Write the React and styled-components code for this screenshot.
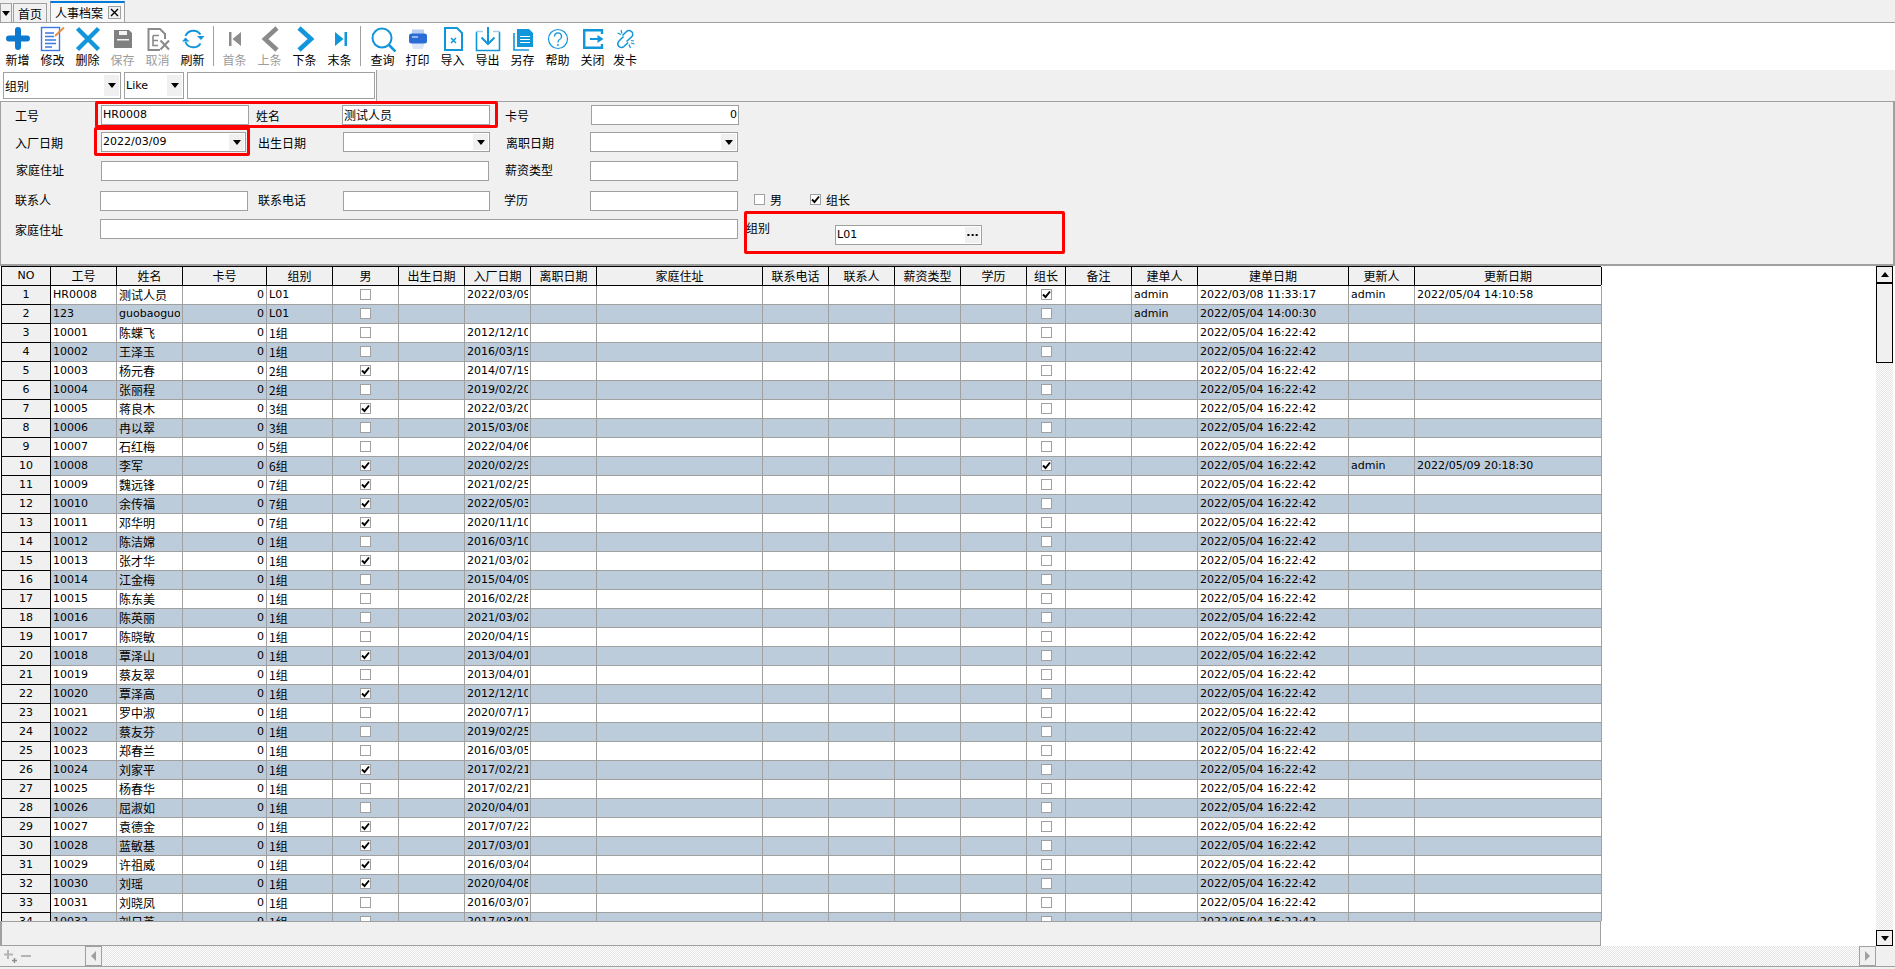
import React from "react";
import styled, { createGlobalStyle } from "styled-components";

const LATIN = `"DejaVu Sans", "Noto Sans CJK SC", sans-serif`;
const CJK = `"Noto Sans CJK SC", "DejaVu Sans", sans-serif`;
const LINE = "#a0a0a0";
const PANEL = "#f0f0f0";
const BLUE = "#1296db";
const DITHER = `repeating-conic-gradient(#e4e4e4 0 25%, #ffffff 0 50%) 0 0 / 2px 2px`;

const GlobalStyle = createGlobalStyle`
  html, body {
    margin: 0;
    height: 969px;
    overflow: hidden;
    background: #f0f0f0;
  }
`;

const Page = styled.div`
  width: 1895px;
  height: 969px;
  display: flex;
  flex-direction: column;
  font-family: ${CJK};
  font-size: 12px;
  color: #000;
  overflow: hidden;
`;

/* ---- tabs ---- */
const TabBar = styled.div`
  height: 22px;
  flex: none;
  display: flex;
  align-items: flex-end;
  background: ${PANEL};
  border-bottom: 1px solid ${LINE};
`;

const TabMenu = styled.div`
  width: 10px;
  height: 18px;
  border: 1px solid ${LINE};
  border-bottom: 0;
  box-sizing: content-box;
  margin-right: 1px;
  display: flex;
  align-items: center;
  justify-content: center;
`;

const Tab = styled.div`
  height: ${(p) => (p.$active ? "21px" : "19px")};
  box-sizing: border-box;
  padding: 0 ${(p) => (p.$active ? "3px" : "4px")} 0 4px;
  margin-right: 3px;
  display: flex;
  align-items: center;
  gap: 5px;
  border: 1px solid ${LINE};
  border-bottom: 0;
  background: ${(p) => (p.$active ? "#f8f8f8" : "#f0f0f0")};
  border-top: ${(p) => (p.$active ? "2px solid #0078d7" : `1px solid ${LINE}`)};
`;

const TabClose = styled.span`
  width: 13px;
  height: 13px;
  box-sizing: border-box;
  border: 1px solid ${LINE};
  background: #f0f0f0;
  display: flex;
  align-items: center;
  justify-content: center;
`;

const Arrow = styled.span`
  display: block;
  flex: none;
  width: 0;
  height: 0;
  border-left: ${(p) => p.$size || 4}px solid transparent;
  border-right: ${(p) => p.$size || 4}px solid transparent;
  border-top: ${(p) => (p.$up ? 0 : `${(p.$size || 4) + 1}px solid #000`)};
  border-bottom: ${(p) => (p.$up ? `${(p.$size || 4) + 1}px solid #000` : 0)};
`;

/* ---- toolbar ---- */
const Toolbar = styled.div`
  height: 47px;
  flex: none;
  display: flex;
  background: #fff;
  box-sizing: border-box;
  padding-top: 3px;
`;

const ToolButton = styled.div`
  width: ${(p) => p.$w || 35}px;
  display: flex;
  flex-direction: column;
  align-items: center;
  color: ${(p) => (p.$off ? "#9c9c9c" : "#000")};
  line-height: 16px;
  svg {
    display: block;
    flex: none;
  }
`;

const ToolSep = styled.div`
  width: 1px;
  height: 40px;
  margin: 0 ${(p) => p.$right}px 0 3px;
  background: ${LINE};
`;

/* ---- quick filter ---- */
const FilterRow = styled.div`
  height: 31px;
  flex: none;
  box-sizing: border-box;
  display: flex;
  align-items: flex-start;
  gap: 3px;
  width: 377px;
  padding: 2px 0 0 3px;
  background: #fff;
  border-right: 1px solid ${LINE};
`;

const FilterBox = styled.div`
  width: ${(p) => p.$w}px;
  height: 27px;
  box-sizing: border-box;
  border: 1px solid ${LINE};
  background: #fff;
  display: flex;
  align-items: center;
  padding: 2px 1px 2px 1px;
  font-family: ${(p) => (p.$latin ? LATIN : CJK)};
  font-size: ${(p) => (p.$latin ? "11px" : "12px")};
`;

const BoxText = styled.span`
  flex: 1;
  white-space: nowrap;
  overflow: hidden;
`;

const DropButton = styled.span`
  width: 15px;
  align-self: stretch;
  background: ${PANEL};
  display: flex;
  align-items: center;
  justify-content: center;
  font-weight: 700;
  font-size: 11px;
`;

/* ---- form ---- */
const Form = styled.div`
  position: relative;
  height: 165px;
  flex: none;
  box-sizing: border-box;
  background: ${PANEL};
  border-top: 1px solid ${LINE};
  border-left: 1px solid ${LINE};
  border-right: 2px solid ${LINE};
  border-bottom: 2px solid ${LINE};
  padding-top: 3px;
`;

const FormRow = styled.div`
  display: flex;
  height: ${(p) => p.$h || 20}px;
  margin-bottom: ${(p) => p.$gap}px;
  margin-left: ${(p) => p.$left}px;
`;

const FieldLabel = styled.div`
  width: ${(p) => p.$w}px;
  padding-left: ${(p) => p.$pad || 0}px;
  padding-top: ${(p) => p.$top ?? 3}px;
  box-sizing: border-box;
  line-height: 16px;
  flex: none;
  white-space: nowrap;
`;

const Field = styled.div`
  width: ${(p) => p.$w}px;
  height: 20px;
  flex: none;
  box-sizing: border-box;
  border: 1px solid ${LINE};
  background: #fff;
  display: flex;
  align-items: stretch;
  padding: 1px;
  margin-top: ${(p) => p.$top || 0}px;
  font-family: ${(p) => (p.$cjk ? CJK : LATIN)};
  font-size: ${(p) => (p.$cjk ? "12px" : "11px")};
  line-height: 15px;
  justify-content: ${(p) => (p.$right ? "flex-end" : "flex-start")};
`;

const CheckWrap = styled.div`
  display: flex;
  align-items: center;
  gap: 5px;
  height: 16px;
  margin-left: ${(p) => p.$left}px;
`;

const Box = styled.span`
  width: 11px;
  height: 11px;
  flex: none;
  box-sizing: border-box;
  border: 1px solid ${LINE};
  background: #fff;
  display: flex;
  align-items: center;
  justify-content: center;
`;

const Annotation = styled.div`
  position: absolute;
  left: ${(p) => p.$x}px;
  top: ${(p) => p.$y}px;
  width: ${(p) => p.$w}px;
  height: ${(p) => p.$h}px;
  box-sizing: border-box;
  border: 3px solid #f00;
  border-radius: 2px;
  pointer-events: none;
`;

/* ---- grid ---- */
const GridArea = styled.div`
  height: 680px;
  flex: none;
  display: flex;
  background: #fff;
  padding-right: 2px;
`;

const GridPane = styled.div`
  flex: 1;
  min-width: 0;
  display: flex;
  flex-direction: column;
`;

const TableClip = styled.div`
  height: 655px;
  flex: none;
  overflow: hidden;
  padding-left: 1px;
`;

const TEMPLATE = "50px 66px 66px 84px 66px 66px 66px 66px 66px 166px 66px 66px 66px 66px 39px 66px 66px 151px 66px 187px";

const HeadRow = styled.div`
  display: grid;
  grid-template-columns: ${TEMPLATE};
  width: 1600px;
  height: 20px;
  box-sizing: border-box;
  border-top: 1px solid #000;
  border-bottom: 1px solid #000;
  background: ${PANEL};
`;

const HeadCell = styled.div`
  box-sizing: border-box;
  border-right: 1px solid #000;
  border-left: ${(p) => (p.$first ? "1px solid #000" : "0")};
  text-align: center;
  line-height: 17px;
  font-family: ${(p) => (p.$latin ? LATIN : CJK)};
  font-size: ${(p) => (p.$latin ? "11px" : "12px")};
`;

const Row = styled.div`
  display: grid;
  grid-template-columns: ${TEMPLATE};
  width: 1600px;
  height: 19px;
  background: ${(p) => (p.$alt ? "#bdccda" : "#fff")};
`;

const NoCell = styled.div`
  box-sizing: border-box;
  background: ${PANEL};
  border-left: 1px solid #000;
  border-right: 1px solid #000;
  border-bottom: 1px solid #000;
  text-align: center;
  line-height: 18px;
  font-family: ${LATIN};
  font-size: 11px;
`;

const Cell = styled.div`
  box-sizing: border-box;
  border-right: 1px solid ${LINE};
  border-bottom: 1px solid ${LINE};
  padding: 0 2px;
  min-width: 0;
  text-align: ${(p) => p.$align || "left"};
  line-height: 18px;
  font-family: ${(p) => (p.$cjk ? CJK : LATIN)};
  font-size: ${(p) => (p.$cjk ? "12px" : "11px")};
`;

const CellText = styled.div`
  white-space: nowrap;
  overflow: hidden;
`;

const CheckCell = styled.div`
  box-sizing: border-box;
  border-right: 1px solid ${LINE};
  border-bottom: 1px solid ${LINE};
  display: flex;
  justify-content: center;
  padding-top: 3px;
`;

const GridFooter = styled.div`
  width: 1601px;
  height: 25px;
  flex: none;
  box-sizing: border-box;
  background: ${PANEL};
  border: 1px solid ${LINE};
  border-left-width: 2px;
`;

const VScroll = styled.div`
  width: 17px;
  flex: none;
  display: flex;
  flex-direction: column;
  background: ${DITHER};
`;

const ScrollButton = styled.div`
  width: 17px;
  height: ${(p) => p.$h || 17}px;
  flex: none;
  box-sizing: border-box;
  border: 1px solid ${(p) => (p.$gray ? LINE : "#000")};
  background: ${PANEL};
  display: flex;
  align-items: center;
  justify-content: center;
`;

const VThumb = styled.div`
  height: 80px;
  flex: none;
  box-sizing: border-box;
  border: 1px solid #000;
  background: ${PANEL};
`;

const VTrack = styled.div`
  flex: 1;
`;

const HBar = styled.div`
  height: 21px;
  flex: none;
  box-sizing: border-box;
  display: flex;
  border-bottom: 1px solid ${LINE};
  background: ${PANEL};
`;

const PlusMinus = styled.div`
  width: 85px;
  flex: none;
  display: flex;
  align-items: center;
  gap: 2px;
  padding-left: 3px;
  box-sizing: border-box;
`;

const HTrack = styled.div`
  flex: 1;
  background: ${DITHER};
`;

const GrayTriangle = styled.span`
  width: 0;
  height: 0;
  border-top: 5px solid transparent;
  border-bottom: 5px solid transparent;
  border-left: ${(p) => (p.$right ? `5px solid ${LINE}` : "0")};
  border-right: ${(p) => (p.$right ? "0" : `5px solid ${LINE}`)};
`;

const HCorner = styled.div`
  width: 19px;
  flex: none;
`;

/* ---- icons: each one sits in a 26x26 box ---- */
const Svg = ({ children }) => (
  <svg width="26" height="26" viewBox="0 0 26 26" fill="none">
    {children}
  </svg>
);

const ICONS = {
  add: (
    <path d="M13 4V21 M4 12.5H22" stroke="#0b79d0" strokeWidth="6" strokeLinecap="round" />
  ),
  edit: (
    <>
      <rect x="1.5" y="1.5" width="18" height="23" stroke="#3a78e4" strokeWidth="1.4" />
      <path d="M5 7H14 M5 10.5H14 M5 14H16 M5 17.5H16 M5 21H12" stroke="#3a78e4" strokeWidth="1.3" />
      <path d="M24 1.5L15 10" stroke="#f08a3c" strokeWidth="1.8" />
    </>
  ),
  remove: <path d="M2.5 2.5L23.5 23.5 M23.5 2.5L2.5 23.5" stroke={BLUE} strokeWidth="4.4" />,
  save: (
    <>
      <path d="M4 4H19L22 7V22H4Z" fill="#808080" />
      <rect x="9" y="5" width="8" height="4" fill="#f4f4f4" />
      <rect x="7" y="13" width="12" height="1.5" fill="#f4f4f4" />
    </>
  ),
  cancel: (
    <>
      <path d="M15 24H3.5V3H15L20 8V13" stroke="#8a8a8a" strokeWidth="2" />
      <path d="M8 9.5H14 M8 9.5V19.5H13 M8 14.5H13" stroke="#8a8a8a" strokeWidth="1.6" />
      <path d="M15.5 14.5L24 23.5 M24 14.5L15.5 23.5" stroke="#8a8a8a" strokeWidth="2" />
    </>
  ),
  refresh: (
    <>
      <path d="M5.5 10A8.5 8.5 0 0 1 20.5 8.5" stroke={BLUE} strokeWidth="2" />
      <path d="M20.5 17.5A8.5 8.5 0 0 1 5.5 16" stroke={BLUE} strokeWidth="2" />
      <path d="M17 10H24.5L21 14Z M2 15.5H9.5L5.5 11.5Z" fill={BLUE} />
    </>
  ),
  first: <path d="M7 6H9.5V20H7Z M10.5 13L19 6V20Z" fill="#8c8c8c" />,
  prev: <path d="M20 2L8 13L20 24" stroke="#8a8a8a" strokeWidth="4.6" />,
  next: <path d="M7 2L19 13L7 24" stroke={BLUE} strokeWidth="4.6" />,
  last: <path d="M8 6L16.5 13L8 20Z M17.5 6H20V20H17.5Z" fill={BLUE} />,
  search: (
    <>
      <circle cx="12" cy="12" r="9.5" stroke={BLUE} strokeWidth="2" />
      <path d="M19 19L25.5 25.5" stroke={BLUE} strokeWidth="2.6" />
    </>
  ),
  print: (
    <>
      <rect x="7" y="3.5" width="12" height="5" fill="#b9cdf2" />
      <path d="M7 18H19 M7 20H19 M8 22H18" stroke="#b9cdf2" strokeWidth="1.2" />
      <rect x="4" y="7.5" width="18" height="10" rx="2.5" fill="#2b6bd6" />
      <path d="M7 11H13" stroke="#fff" strokeWidth="1" />
    </>
  ),
  imports: (
    <>
      <path d="M5 2H17L22 7V24H5Z" stroke={BLUE} strokeWidth="2" />
      <path d="M11 12L16 17 M16 12L11 17" stroke={BLUE} strokeWidth="1.5" />
    </>
  ),
  exports: (
    <>
      <path d="M1.5 6V24.5H24.5V6" stroke={BLUE} strokeWidth="1.6" />
      <path d="M1 5.5H8 M18 5.5H25" stroke="#9fd0f0" strokeWidth="1.4" />
      <path d="M13 1V18 M6.5 11.5L13 18L19.5 11.5" stroke={BLUE} strokeWidth="2" />
    </>
  ),
  saveas: (
    <>
      <path d="M4 7V24H19" stroke={BLUE} strokeWidth="1.6" />
      <path d="M7 3H19L23 7V21H7Z" fill={BLUE} />
      <path d="M10 10.5H20 M10 13.5H20 M10 16.5H20" stroke="#fff" strokeWidth="1.2" />
    </>
  ),
  help: (
    <>
      <circle cx="13" cy="13" r="9.5" stroke={BLUE} strokeWidth="1.2" />
      <path d="M9.5 10.5A3.5 3.5 0 1 1 14.5 13.5C13.3 14 13 15 13 16.5" stroke={BLUE} strokeWidth="1.3" />
      <circle cx="13" cy="19" r="0.9" fill={BLUE} />
    </>
  ),
  exit: (
    <>
      <path d="M22 8V4.2H4.2V21.8H22V18" stroke={BLUE} strokeWidth="2.4" />
      <path d="M10 13H19" stroke={BLUE} strokeWidth="2" />
      <path d="M17.5 9L23.5 13L17.5 17Z" fill={BLUE} />
    </>
  ),
  unlink: (
    <>
      <path d="M11.5 10.5L7 15A3.6 3.6 0 0 0 12 20.5L16 16.5" stroke={BLUE} strokeWidth="1.6" />
      <path d="M14.5 15.5L19.5 11A3.6 3.6 0 0 0 14.5 5.5L10.5 9.5" stroke={BLUE} strokeWidth="1.6" />
      <path d="M9 4L10 7.5 M5.5 7L9 8.5 M22.5 18L19 17 M18.5 22L17 18.5 M22 15L19 14.5" stroke={BLUE} strokeWidth="1.2" />
    </>
  ),
};

const Tool = ({ icon, label, off, w }) => (
  <ToolButton $off={off} $w={w}>
    <Svg>{ICONS[icon]}</Svg>
    {label}
  </ToolButton>
);

const CheckMark = () => (
  <svg width="9" height="9" viewBox="0 0 9 9">
    <path d="M1 4.5L3.5 7L8 1.5" fill="none" stroke="#000" strokeWidth="1.9" />
  </svg>
);

const Check = ({ on }) => <Box>{on ? <CheckMark /> : null}</Box>;

/* ---- data ---- */
const COLUMNS = [
  { key: "code", title: "工号" },
  { key: "name", title: "姓名", cjk: true },
  { key: "card", title: "卡号", align: "right" },
  { key: "group", title: "组别", cjk: true },
  { key: "male", title: "男", check: true },
  { key: "birth", title: "出生日期" },
  { key: "join", title: "入厂日期" },
  { key: "leave", title: "离职日期" },
  { key: "addr", title: "家庭住址" },
  { key: "phone", title: "联系电话" },
  { key: "contact", title: "联系人" },
  { key: "salary", title: "薪资类型" },
  { key: "edu", title: "学历" },
  { key: "lead", title: "组长", check: true },
  { key: "note", title: "备注" },
  { key: "creator", title: "建单人" },
  { key: "created", title: "建单日期" },
  { key: "updater", title: "更新人" },
  { key: "updated", title: "更新日期" },
];

const PEOPLE = [
  ["HR0008", "测试人员", "L01", 0, "2022/03/09"],
  ["123", "guobaoguo", "L01", 0, ""],
  ["10001", "陈蝶飞", "1组", 0, "2012/12/10"],
  ["10002", "王泽玉", "1组", 0, "2016/03/19"],
  ["10003", "杨元春", "2组", 1, "2014/07/19"],
  ["10004", "张丽程", "2组", 0, "2019/02/20"],
  ["10005", "蒋良木", "3组", 1, "2022/03/20"],
  ["10006", "冉以翠", "3组", 0, "2015/03/08"],
  ["10007", "石红梅", "5组", 0, "2022/04/06"],
  ["10008", "李军", "6组", 1, "2020/02/29"],
  ["10009", "魏远锋", "7组", 1, "2021/02/25"],
  ["10010", "余传福", "7组", 1, "2022/05/03"],
  ["10011", "邓华明", "7组", 1, "2020/11/10"],
  ["10012", "陈洁嫦", "1组", 0, "2016/03/10"],
  ["10013", "张才华", "1组", 1, "2021/03/02"],
  ["10014", "江金梅", "1组", 0, "2015/04/09"],
  ["10015", "陈东美", "1组", 0, "2016/02/28"],
  ["10016", "陈英丽", "1组", 0, "2021/03/02"],
  ["10017", "陈晓敏", "1组", 0, "2020/04/19"],
  ["10018", "覃泽山", "1组", 1, "2013/04/01"],
  ["10019", "蔡友翠", "1组", 0, "2013/04/01"],
  ["10020", "覃泽高", "1组", 1, "2012/12/10"],
  ["10021", "罗中淑", "1组", 0, "2020/07/17"],
  ["10022", "蔡友芬", "1组", 0, "2019/02/25"],
  ["10023", "郑春兰", "1组", 0, "2016/03/05"],
  ["10024", "刘家平", "1组", 1, "2017/02/21"],
  ["10025", "杨春华", "1组", 0, "2017/02/21"],
  ["10026", "屈淑如", "1组", 0, "2020/04/01"],
  ["10027", "袁德金", "1组", 1, "2017/07/22"],
  ["10028", "蓝敏基", "1组", 1, "2017/03/01"],
  ["10029", "许祖威", "1组", 1, "2016/03/04"],
  ["10030", "刘瑶", "1组", 1, "2020/04/08"],
  ["10031", "刘晓凤", "1组", 0, "2016/03/07"],
  ["10032", "刘日英", "1组", 0, "2017/03/01"],
];

const EXTRA = {
  0: { lead: 1, creator: "admin", created: "2022/03/08 11:33:17", updater: "admin", updated: "2022/05/04 14:10:58" },
  1: { creator: "admin", created: "2022/05/04 14:00:30" },
  9: { lead: 1, updater: "admin", updated: "2022/05/09 20:18:30" },
};

const ROWS = PEOPLE.map(([code, name, group, male, join], i) => ({
  code,
  name,
  card: "0",
  group,
  male,
  join,
  created: "2022/05/04 16:22:42",
  ...EXTRA[i],
}));

const App = () => {
  return (
    <Page>
      <GlobalStyle />
      <TabBar>
        <TabMenu>
          <Arrow />
        </TabMenu>
        <Tab>首页</Tab>
        <Tab $active>
          人事档案
          <TabClose>
            <svg width="9" height="9" viewBox="0 0 9 9">
              <path d="M1 1L8 8 M8 1L1 8" stroke="#000" strokeWidth="1.4" />
            </svg>
          </TabClose>
        </Tab>
      </TabBar>

      <Toolbar>
        <Tool icon="add" label="新增" />
        <Tool icon="edit" label="修改" />
        <Tool icon="remove" label="删除" />
        <Tool icon="save" label="保存" off />
        <Tool icon="cancel" label="取消" off />
        <Tool icon="refresh" label="刷新" />
        <ToolSep $right={3} />
        <Tool icon="first" label="首条" off />
        <Tool icon="prev" label="上条" off />
        <Tool icon="next" label="下条" />
        <Tool icon="last" label="末条" />
        <ToolSep $right={4} />
        <Tool icon="search" label="查询" />
        <Tool icon="print" label="打印" />
        <Tool icon="imports" label="导入" />
        <Tool icon="exports" label="导出" />
        <Tool icon="saveas" label="另存" />
        <Tool icon="help" label="帮助" />
        <Tool icon="exit" label="关闭" />
        <Tool icon="unlink" label="发卡" w={30} />
      </Toolbar>

      <FilterRow>
        <FilterBox $w={118}>
          <BoxText>组别</BoxText>
          <DropButton>
            <Arrow />
          </DropButton>
        </FilterBox>
        <FilterBox $w={60} $latin>
          <BoxText>Like</BoxText>
          <DropButton>
            <Arrow />
          </DropButton>
        </FilterBox>
        <FilterBox $w={188} />
      </FilterRow>

      <Form>
        <FormRow $left={14} $gap={7}>
          <FieldLabel $w={86}>工号</FieldLabel>
          <Field $w={148}>HR0008</Field>
          <FieldLabel $w={93} $pad={7}>姓名</FieldLabel>
          <Field $w={148} $cjk>测试人员</Field>
          <FieldLabel $w={101} $pad={15}>卡号</FieldLabel>
          <Field $w={148} $right>0</Field>
        </FormRow>
        <FormRow $left={14} $gap={9}>
          <FieldLabel $w={86}>入厂日期</FieldLabel>
          <Field $w={145}>
            <BoxText>2022/03/09</BoxText>
            <DropButton><Arrow /></DropButton>
          </Field>
          <FieldLabel $w={97} $pad={12}>出生日期</FieldLabel>
          <Field $w={147}>
            <BoxText />
            <DropButton><Arrow /></DropButton>
          </Field>
          <FieldLabel $w={100} $pad={16}>离职日期</FieldLabel>
          <Field $w={148}>
            <BoxText />
            <DropButton><Arrow /></DropButton>
          </Field>
        </FormRow>
        <FormRow $left={15} $gap={10}>
          <FieldLabel $w={85} $top={1}>家庭住址</FieldLabel>
          <Field $w={388} />
          <FieldLabel $w={101} $pad={16} $top={1}>薪资类型</FieldLabel>
          <Field $w={148} />
        </FormRow>
        <FormRow $left={14} $gap={8}>
          <FieldLabel $w={85} $top={1}>联系人</FieldLabel>
          <Field $w={148} />
          <FieldLabel $w={95} $pad={10} $top={1}>联系电话</FieldLabel>
          <Field $w={147} />
          <FieldLabel $w={100} $pad={14} $top={1}>学历</FieldLabel>
          <Field $w={148} />
          <CheckWrap $left={16}><Check />男</CheckWrap>
          <CheckWrap $left={28}><Check on />组长</CheckWrap>
        </FormRow>
        <FormRow $left={14} $h={26}>
          <FieldLabel $w={85}>家庭住址</FieldLabel>
          <Field $w={638} />
          <FieldLabel $w={97} $pad={8} $top={1}>组别</FieldLabel>
          <Field $w={147} $top={6}>
            <BoxText>L01</BoxText>
            <DropButton>···</DropButton>
          </Field>
        </FormRow>
        <Annotation $x={94} $y={-1} $w={403} $h={27} />
        <Annotation $x={93} $y={25} $w={156} $h={29} />
        <Annotation $x={743} $y={109} $w={321} $h={43} />
      </Form>

      <GridArea>
        <GridPane>
          <TableClip>
            <HeadRow>
              <HeadCell $first $latin>NO</HeadCell>
              {COLUMNS.map((col) => (
                <HeadCell key={col.key}>{col.title}</HeadCell>
              ))}
            </HeadRow>
            {ROWS.map((row, i) => (
              <Row key={row.code} $alt={i % 2 === 1}>
                <NoCell>{i + 1}</NoCell>
                {COLUMNS.map((col) =>
                  col.check ? (
                    <CheckCell key={col.key}>
                      <Check on={row[col.key]} />
                    </CheckCell>
                  ) : (
                    <Cell
                      key={col.key}
                      $align={col.align}
                      $cjk={col.cjk && row[col.key] !== "L01" && row[col.key] !== "guobaoguo"}
                    >
                      <CellText>{row[col.key]}</CellText>
                    </Cell>
                  )
                )}
              </Row>
            ))}
          </TableClip>
          <GridFooter />
        </GridPane>
        <VScroll>
          <ScrollButton>
            <Arrow $up />
          </ScrollButton>
          <VThumb />
          <VTrack />
          <ScrollButton $h={16}>
            <Arrow />
          </ScrollButton>
        </VScroll>
      </GridArea>

      <HBar>
        <PlusMinus>
          <svg width="14" height="14" viewBox="0 0 14 14">
            <path d="M5 1V10 M1 5.5H10" stroke="#b4b4b4" strokeWidth="2" />
            <path d="M9 11.5H14 M11.5 9V14" stroke="#8c8c8c" strokeWidth="1.4" />
          </svg>
          <svg width="14" height="14" viewBox="0 0 14 14">
            <path d="M2 7H12" stroke="#b4b4b4" strokeWidth="2" />
          </svg>
        </PlusMinus>
        <ScrollButton $gray $h={20}>
          <GrayTriangle />
        </ScrollButton>
        <HTrack />
        <ScrollButton $gray $h={20}>
          <GrayTriangle $right />
        </ScrollButton>
        <HCorner />
      </HBar>
    </Page>
  );
};

export default App;
